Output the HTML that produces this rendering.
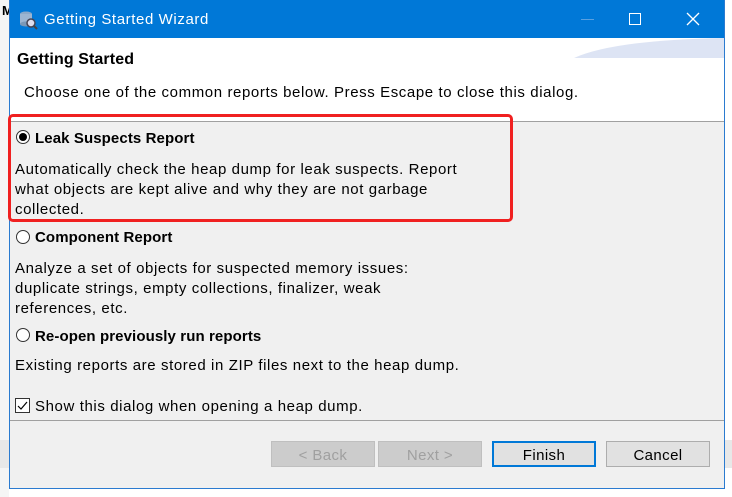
<!DOCTYPE html>
<html><head><style>
body{margin:0;width:732px;height:497px;overflow:hidden;background:#fff;font-family:"Liberation Sans",sans-serif;position:relative}
.abs{position:absolute}
.dlg{left:9px;top:0;width:714px;height:488px;border:1px solid #2b7bd0;border-top:none;background:#f0f0f0}
.title{left:0;top:0;width:714px;height:38px;background:#0078d7;color:#fff;font-size:15px;letter-spacing:0.6px}
.hdr{left:0;top:38px;width:714px;height:83px;background:#fff;border-bottom:1px solid #a0a0a0}
.t{font-size:15px;color:#000;white-space:nowrap;letter-spacing:0.6px}
.b{font-weight:bold;letter-spacing:0.1px}
.radio{width:12px;height:12px;border:1px solid #333;border-radius:50%;background:#fff}
.btn{top:441px;height:26px;width:104px;border:1px solid #adadad;background:#e1e1e1;font-size:15px;letter-spacing:0.4px;text-align:center;line-height:27px;box-sizing:border-box}
</style></head><body>
<div class="abs" style="left:0;top:0;width:9px;height:497px;background:#f5f5f5"></div>
<div class="abs t b" style="left:2px;top:3px;font-size:13px">M</div>
<div class="abs" style="left:0;top:440px;width:732px;height:28px;background:#e8e8e8"></div>
<div class="abs dlg">
 <div class="abs title">
  <svg class="abs" style="left:8px;top:10px" width="20" height="20"><ellipse cx="8" cy="4" rx="6" ry="2.5" fill="#8aa8c8"/><rect x="2" y="4" width="12" height="10" fill="#9bb5d2"/><ellipse cx="8" cy="14" rx="6" ry="2.5" fill="#7a98b8"/><circle cx="13" cy="13" r="4" fill="#dde" stroke="#445" stroke-width="1.5"/><line x1="16" y1="16" x2="19" y2="19" stroke="#444" stroke-width="2"/></svg>
  <div class="abs" style="left:34px;top:11px">Getting Started Wizard</div>
  <div class="abs" style="left:571px;top:19px;width:13px;height:1px;background:#5aa0e0"></div>
  <div class="abs" style="left:619px;top:13px;width:10px;height:10px;border:1px solid #fff"></div>
  <svg class="abs" style="left:676px;top:12px" width="14" height="14"><path d="M1 1L13 13M13 1L1 13" stroke="#fff" stroke-width="1.3"/></svg>
 </div>
 <div class="abs hdr">
  <svg class="abs" style="right:0;top:0" width="150" height="20"><path d="M0 20 Q40 2 150 0 L150 20Z" fill="#dde4f4"/></svg>
  <div class="abs t b" style="left:7px;top:13px;font-size:16px">Getting Started</div>
  <div class="abs t" style="left:14px;top:46px">Choose one of the common reports below. Press Escape to close this dialog.</div>
 </div>
 <div class="abs radio" style="left:6px;top:130px"><div class="abs" style="left:2px;top:2px;width:8px;height:8px;border-radius:50%;background:#000"></div></div>
 <div class="abs t b" style="left:25px;top:130px">Leak Suspects Report</div>
 <div class="abs t" style="left:5px;top:160px;line-height:20px">Automatically check the heap dump for leak suspects. Report<br>what objects are kept alive and why they are not garbage<br>collected.</div>
 <div class="abs radio" style="left:6px;top:230px"></div>
 <div class="abs t b" style="left:25px;top:229px">Component Report</div>
 <div class="abs t" style="left:5px;top:259px;line-height:20px">Analyze a set of objects for suspected memory issues:<br>duplicate strings, empty collections, finalizer, weak<br>references, etc.</div>
 <div class="abs radio" style="left:6px;top:328px"></div>
 <div class="abs t b" style="left:25px;top:328px">Re-open previously run reports</div>
 <div class="abs t" style="left:5px;top:357px">Existing reports are stored in ZIP files next to the heap dump.</div>
 <div class="abs" style="left:5px;top:398px;width:13px;height:13px;border:1px solid #333;background:#fff"><svg width="13" height="13"><path d="M2 7L5 10L11 3" stroke="#000" fill="none" stroke-width="1.2"/></svg></div>
 <div class="abs t" style="left:25px;top:398px">Show this dialog when opening a heap dump.</div>
 <div class="abs" style="left:0;top:420px;width:714px;height:1px;background:#a0a0a0"></div>
 <div class="abs btn" style="left:261px;color:#a0a0a0;background:#ccc;border-color:#bfbfbf">&lt; Back</div>
 <div class="abs btn" style="left:368px;color:#a0a0a0;background:#ccc;border-color:#bfbfbf">Next &gt;</div>
 <div class="abs btn" style="left:482px;border:2px solid #0078d7;line-height:25px">Finish</div>
 <div class="abs btn" style="left:596px">Cancel</div>
</div>
<div class="abs" style="left:8px;top:114px;width:499px;height:102px;border:3px solid #f02020;border-radius:5px"></div>
</body></html>
